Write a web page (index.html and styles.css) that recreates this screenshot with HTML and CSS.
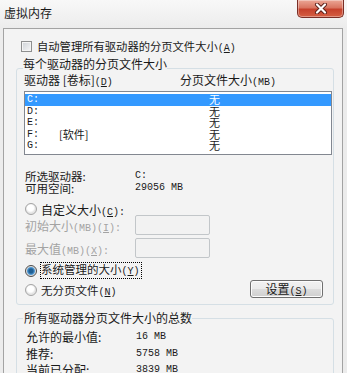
FILE: index.html
```html
<!DOCTYPE html>
<html lang="zh-CN">
<head>
  <meta charset="UTF-8">
  <title>虚拟内存</title>
  <link rel="stylesheet" href="styles.css">
</head>
<body>
  <div class="titlebar">
    <span class="title">虚拟内存</span>
    <button class="close-btn" aria-label="关闭">
      <svg width="14" height="11" viewBox="0 0 14 11" aria-hidden="true">
        <path d="M3 1.5 L11 9.5 M11 1.5 L3 9.5" stroke="#5a1f18" stroke-width="4" stroke-linecap="round"/>
        <path d="M3 1.5 L11 9.5 M11 1.5 L3 9.5" stroke="#fff" stroke-width="2.2" stroke-linecap="round"/>
      </svg>
    </button>
  </div>

  <div class="frame">
    <label class="auto-row">
      <span class="checkbox"></span>
      <span>自动管理所有驱动器的分页文件大小<span class="en">(<u>A</u>)</span></span>
    </label>

    <fieldset class="group drives">
      <legend>每个驱动器的分页文件大小</legend>
      <div class="list-head">
        <span class="col-drive">驱动器 [卷标]<span class="en">(<u>D</u>)</span></span>
        <span>分页文件大小<span class="en">(MB)</span></span>
      </div>
      <div class="listbox">
        <div class="row selected"><span class="en">C:</span><span></span><span>无</span></div>
        <div class="row"><span class="en">D:</span><span></span><span>无</span></div>
        <div class="row"><span class="en">E:</span><span></span><span>无</span></div>
        <div class="row"><span class="en">F:</span><span>[软件]</span><span>无</span></div>
        <div class="row"><span class="en">G:</span><span></span><span>无</span></div>
      </div>

      <div class="info">
        <div class="info-row"><span class="k">所选驱动器:</span><span class="en">C:</span></div>
        <div class="info-row"><span class="k">可用空间:</span><span class="en">29056 MB</span></div>
      </div>

      <div class="radio-row custom"><span class="radio"></span><span>自定义大小<span class="en">(<u>C</u>):</span></span></div>
      <div class="field-row first">
        <span class="k">初始大小<span class="en">(MB)(<u>I</u>):</span></span>
        <span class="input"></span>
      </div>
      <div class="field-row">
        <span class="k">最大值<span class="en">(MB)(<u>X</u>):</span></span>
        <span class="input"></span>
      </div>

      <div class="bottom-row">
        <div class="radios">
          <div class="radio-row tall"><span class="radio checked"></span><span class="focus">系统管理的大小<span class="en">(<u>Y</u>)</span></span></div>
          <div class="radio-row tall"><span class="radio"></span><span>无分页文件<span class="en">(<u>N</u>)</span></span></div>
        </div>
        <button class="btn">设置<span class="en">(<u>S</u>)</span></button>
      </div>
    </fieldset>

    <fieldset class="group totals">
      <legend>所有驱动器分页文件大小的总数</legend>
      <div class="total-row"><span class="k">允许的最小值:</span><span class="en">16 MB</span></div>
      <div class="total-row"><span class="k">推荐:</span><span class="en">5758 MB</span></div>
      <div class="total-row"><span class="k">当前已分配:</span><span class="en">3839 MB</span></div>
    </fieldset>
  </div>
</body>
</html>
```

FILE: styles.css
```css
* {
  box-sizing: border-box;
}
body {
  margin: 0;
  width: 347px;
  height: 373px;
  overflow: hidden;
  background: #ececec;
  font: 12px "Noto Sans CJK SC", sans-serif;
  color: #1a1a1a;
}
.en {
  font-family: "Liberation Mono", monospace;
  font-size: 10px;
}

/* title bar */
.titlebar {
  display: flex;
  align-items: flex-start;
  height: 28px;
  background: linear-gradient(#f8f8f8, #ececec);
}
.title {
  padding-left: 4px;
  line-height: 26px;
}
.close-btn {
  margin-left: auto;
  margin-right: 3px;
  width: 47px;
  height: 18px;
  padding: 0;
  display: flex;
  align-items: center;
  justify-content: center;
  border: 1px solid #7a2e26;
  border-top: none;
  border-radius: 0 0 5px 5px;
  background: linear-gradient(#eba796 0%, #d97561 45%, #c6412c 55%, #d55f43 100%);
  box-shadow: inset 0 0 0 1px rgba(255,255,255,0.35);
}

/* main frame */
.frame {
  margin-left: 3px;
  width: 340px;
  height: 400px;
  border: 1px solid #a3a3a3;
  background: #f3f3f3;
  padding-top: 10px;
}
.auto-row {
  display: flex;
  align-items: center;
  gap: 5px;
  height: 14px;
  padding-left: 17px;
  font-size: 11.3px;
}
.checkbox {
  width: 11px;
  height: 11px;
  flex: none;
  border: 1px solid #8e8f8f;
  background: linear-gradient(135deg, #cdd1d6, #f7f7f7);
  box-shadow: inset 0 0 0 1px #f4f4f4;
}

/* group boxes */
.group {
  margin: 5px 0 0 12px;
  width: 318px;
  min-width: 0;
  border: 1px solid #d5dfe5;
  border-radius: 3px;
  padding: 0 0 5px 6px;
}
.group legend {
  padding: 0 0 8px;
  line-height: 12px;
}
.list-head {
  display: flex;
  margin-top: -4px;
  line-height: 12px;
  padding-left: 1px;
}
.col-drive {
  width: 156px;
}
.listbox {
  margin: 2px 0 0 1px;
  width: 308px;
  height: 64px;
  border: 1px solid #828790;
  background: #fff;
  padding-top: 2px;
}
.row {
  display: grid;
  grid-template-columns: 32px 150px 12px;
  height: 11.5px;
  line-height: 11.5px;
  padding-left: 2px;
  font-size: 11px;
}
.row.selected {
  background: #3399ff;
  color: #fff;
}
.info {
  margin-top: 15px;
}
.info-row {
  display: flex;
  line-height: 12px;
  padding-left: 2px;
  font-size: 11.5px;
}
.k {
  width: 110px;
  flex: none;
}
.radio-row {
  display: flex;
  align-items: center;
  gap: 4px;
  height: 14px;
  padding-left: 2px;
}
.radio-row.custom {
  margin-top: 8px;
}
.radio-row.tall {
  height: 19px;
  font-size: 11.5px;
}
.radio {
  width: 12px;
  height: 12px;
  flex: none;
  border-radius: 50%;
  border: 1px solid #a4a4a4;
  background: radial-gradient(circle at 45% 40%, #ffffff 0 3px, #e2e2e2 5px, #f4f4f4 100%);
}
.radio.checked {
  border-color: #4c4c4c;
  background: radial-gradient(circle at 50% 50%, #1f5f93 0 2px, #4f98d3 3.5px, #dcdcdc 4.5px, #f6f6f6 100%);
}
.focus {
  outline: 1px dotted #000;
  outline-offset: 0;
  line-height: 13px;
  padding: 0 1px 0 0;
}
.field-row {
  display: flex;
  align-items: center;
  height: 20px;
  margin-top: 3px;
  padding-left: 2px;
}
.field-row.first {
  margin-top: -1px;
}
.field-row .k {
  color: #a3a3a3;
}
.input {
  width: 75px;
  height: 20px;
  border: 1px solid #c2c6c9;
  border-radius: 2px;
  background: #f2f2f2;
}
.bottom-row {
  display: flex;
  justify-content: space-between;
  margin-top: 3px;
}
.btn {
  align-self: flex-end;
  margin: 0 10px 1px 0;
  width: 73px;
  height: 18px;
  padding: 0;
  border: 1px solid #707070;
  border-radius: 3px;
  background: linear-gradient(#f2f2f2 0%, #ebebeb 50%, #dddddd 50%, #cfcfcf 100%);
  box-shadow: inset 0 0 0 1px #fcfcfc;
  font: inherit;
  line-height: 16px;
  color: #1a1a1a;
}
.group.totals {
  margin-top: 7px;
  padding-top: 7px;
}
.group.totals legend {
  padding: 0 0 0 1px;
}
.total-row {
  display: flex;
  line-height: 12px;
  padding-left: 3px;
}
.total-row + .total-row {
  margin-top: 4.5px;
}
```
